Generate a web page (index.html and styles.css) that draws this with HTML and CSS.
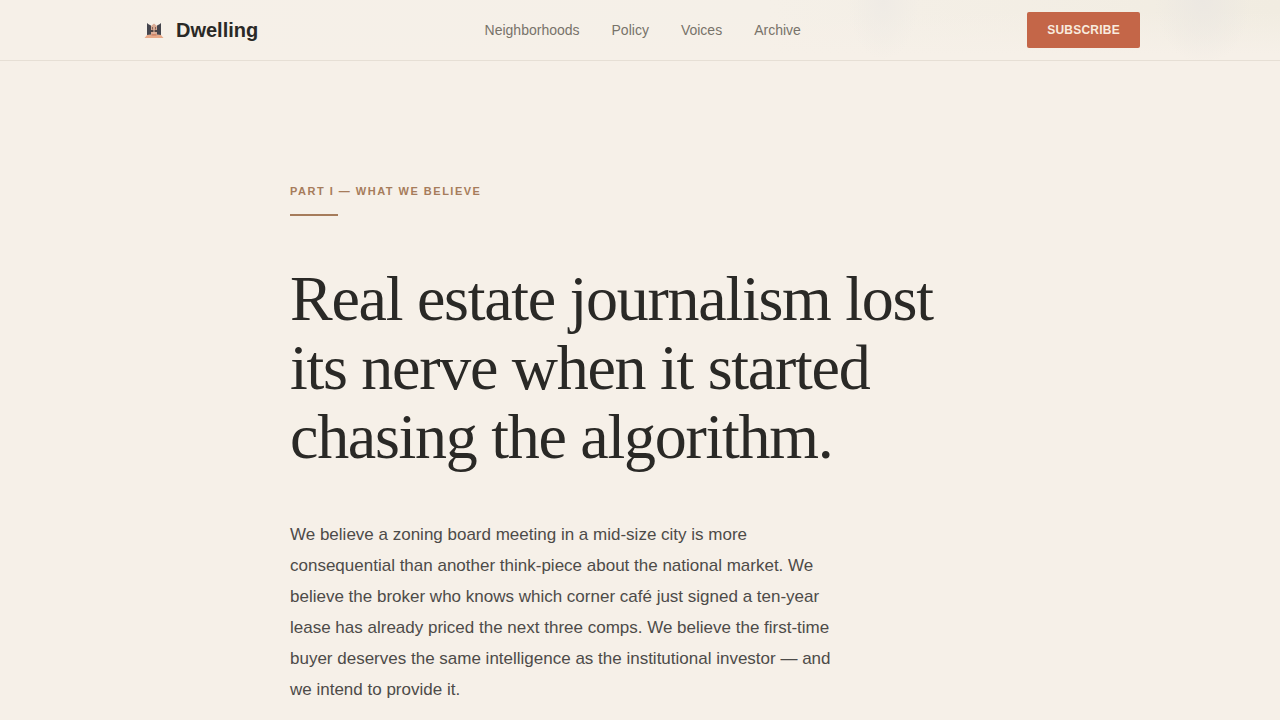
FILE: index.html
```html
<!DOCTYPE html>
<html lang="en">
<head>
<meta charset="utf-8">
<meta name="viewport" content="width=device-width, initial-scale=1">
<title>Dwelling</title>
<link rel="stylesheet" href="styles.css">
</head>
<body>
<header class="site-header">
  <div class="header-inner">
    <a class="brand" href="#">
      <svg class="brand-mark" viewBox="0 0 28 28" aria-hidden="true">
        <path d="M4.5 22 7.5 18.5H20.5L23.5 22Z" fill="#e8a988"/>
        <path d="M10.5 10.5 14 7.5 17.5 10.5V20H10.5Z" fill="#d9ab94"/>
        <path d="M7 7 8.5 8.2 11 9.5V18.5L7 19Z" fill="#44454d"/>
        <path d="M21 7 19.5 8.2 17 9.5V18.5L21 19Z" fill="#44454d"/>
        <path d="M11 14h6v2h-6z" fill="#504544"/>
        <path d="M12 11h1v2.5h-1zM15 11h1v2.5h-1z" fill="#84635a"/>
        <path d="M11.5 18h5v1.6h-5z" fill="#cf8467"/>
        <path d="M13.5 14h1v4h-1z" fill="#e3b7a0"/>
      </svg>
      <span>Dwelling</span>
    </a>
    <nav class="nav" aria-label="Main">
      <a href="#">Neighborhoods</a>
      <a href="#">Policy</a>
      <a href="#">Voices</a>
      <a href="#">Archive</a>
    </nav>
    <button class="subscribe" type="button">Subscribe</button>
  </div>
</header>
<main class="manifesto">
  <p class="eyebrow">Part I — What we believe</p>
  <h1 class="headline">Real estate journalism lost its nerve when it started chasing the algorithm.</h1>
  <p class="body-text">We believe a zoning board meeting in a mid-size city is more consequential than another think-piece about the national market. We believe the broker who knows which corner café just signed a ten-year lease has already priced the next three comps. We believe the first-time buyer deserves the same intelligence as the institutional investor — and we intend to provide it.</p>
</main>
</body>
</html>
```
FILE: styles.css
```css
* {
  box-sizing: border-box;
}

body {
  margin: 0;
  background: #f6f0e8;
  color: #2a2926;
  font-family: "Liberation Sans", Arial, sans-serif;
}

.site-header {
  position: sticky;
  top: 0;
  border-bottom: 1px solid #e6dfd5;
  background:
    radial-gradient(ellipse 48px 64px at 94% 0, #ece8e2, transparent),
    radial-gradient(ellipse 36px 60px at 69% 0, #efebe5, transparent),
    linear-gradient(to bottom, transparent 20%, #f6f0e8 90%),
    linear-gradient(to right, #f6f0e8 5%, #f5f0e8 60%, #f1ece1);
}

.header-inner {
  display: grid;
  grid-template-columns: auto 1fr auto;
  align-items: center;
  max-width: 1080px;
  min-height: 60px;
  margin: 0 auto;
  padding: 0 40px;
}

.brand {
  display: flex;
  align-items: center;
  gap: 8px;
  color: #2a2926;
  font-size: 20px;
  font-weight: 700;
  text-decoration: none;
}

.brand-mark {
  width: 28px;
  height: 28px;
}

.nav {
  display: flex;
  justify-content: center;
  gap: 32px;
}

.nav a {
  color: #78736a;
  font-size: 14px;
  text-decoration: none;
}

.subscribe {
  padding: 11px 20px;
  border: 0;
  border-radius: 2px;
  background: #c46648;
  color: #f8ebdf;
  font-family: inherit;
  font-size: 12px;
  font-weight: 700;
  line-height: 14px;
  letter-spacing: 0.02em;
  text-transform: uppercase;
}

.manifesto {
  max-width: 780px;
  margin: 0 auto;
  padding: 120px 40px;
}

.eyebrow {
  margin: 0 0 48px;
  color: #a67c5b;
  font-size: 11px;
  font-weight: 700;
  line-height: 20px;
  letter-spacing: 1.5px;
  text-transform: uppercase;
}

.eyebrow::after {
  content: "";
  display: block;
  width: 48px;
  height: 2px;
  margin-top: 13px;
  background: #a67c5b;
}

.headline {
  margin: 0 0 48px;
  font-family: "Liberation Serif", "Times New Roman", serif;
  font-size: 64px;
  font-weight: 400;
  line-height: 69px;
  letter-spacing: -0.02em;
}

.body-text {
  max-width: 560px;
  margin: 0;
  color: #4d4b48;
  font-size: 17px;
  line-height: 31px;
}
```
